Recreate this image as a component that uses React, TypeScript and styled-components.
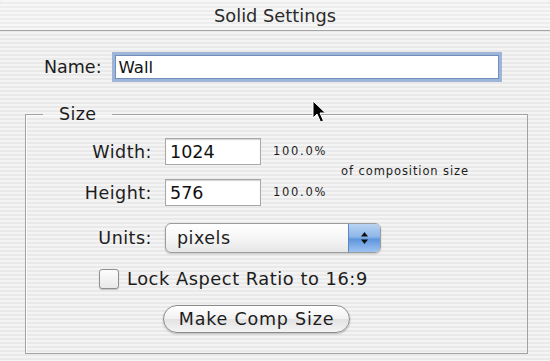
import { FC } from 'react';

import styled, { createGlobalStyle } from 'styled-components';

const GlobalStyle = createGlobalStyle`
  html, body {
    margin: 0;
    padding: 0;
  }
  body {
    font-family: 'DejaVu Sans', 'Liberation Sans', sans-serif;
    color: #1c1c1c;
  }
`;

const pinstripe = `repeating-linear-gradient(
  to bottom,
  #f4f4f4 0px,
  #f4f4f4 2px,
  #e9e9e9 2px,
  #e9e9e9 4px
)`;

/**
 * After Effects "Solid Settings" sheet, Aqua style
 */
const App: FC = () => {
  return (
    <>
      <GlobalStyle />
      <Window>
        <TitleBar>Solid Settings</TitleBar>

        <NameRow>
          <NameLabel>Name:</NameLabel>
          <NameInput defaultValue="Wall" />
        </NameRow>

        <SizeGroup>
          <Legend>Size</Legend>

          <DimGrid>
            <FieldLabel>Width:</FieldLabel>
            <NumberInput defaultValue="1024" />
            <Percent>100.0%</Percent>
            <Note>of composition size</Note>

            <FieldLabel>Height:</FieldLabel>
            <NumberInput defaultValue="576" />
            <Percent>100.0%</Percent>
          </DimGrid>

          <UnitsRow>
            <FieldLabel>Units:</FieldLabel>
            <Popup>
              <PopupValue>pixels</PopupValue>
              <PopupArrows>
                <svg width="9" height="14" viewBox="0 0 9 14">
                  <path d="M4.5 1 L8 5.5 L1 5.5 Z" fill="#111" />
                  <path d="M4.5 13 L8 8.5 L1 8.5 Z" fill="#111" />
                </svg>
              </PopupArrows>
            </Popup>
          </UnitsRow>

          <CheckRow>
            <CheckBox />
            <CheckText>Lock Aspect Ratio to 16:9</CheckText>
          </CheckRow>

          <ButtonRow>
            <PillButton type="button">Make Comp Size</PillButton>
          </ButtonRow>
        </SizeGroup>

        <Cursor width="16" height="24" viewBox="0 0 16 24">
          <path
            d="M1 1 L1 18 L5 14 L8.5 22 L11.5 20.7 L8 13 L13.5 13 Z"
            fill="#000"
            stroke="#fff"
            strokeWidth="1"
            strokeLinejoin="round"
          />
        </Cursor>
      </Window>
    </>
  );
};

export default App;

// Styled Components
const Window = styled.div`
  position: relative;
  width: 550px;
  height: 361px;
  overflow: hidden;
  background: ${pinstripe};
  display: flex;
  flex-direction: column;
`;

const TitleBar = styled.div`
  height: 30px;
  flex-shrink: 0;
  display: flex;
  align-items: center;
  justify-content: center;
  border-bottom: 1px solid #a4a4a4;
  border-radius: 7px 7px 0 0;
  background: repeating-linear-gradient(
    to bottom,
    #f7f7f7 0px,
    #f7f7f7 2px,
    #ededed 2px,
    #ededed 4px
  );
  font-size: 17.8px;
  color: #2a2a2a;
`;

const NameRow = styled.div`
  display: flex;
  align-items: center;
  gap: 13px;
  margin: 24px 0 0 44px;
`;

const NameLabel = styled.label`
  font-size: 17.5px;
`;

const NameInput = styled.input`
  width: 384px;
  height: 24px;
  box-sizing: border-box;
  padding: 0 3px;
  border: 1px solid #6f8fbd;
  background: #fff;
  box-shadow: 0 0 0 3px rgba(132, 162, 208, 0.75);
  font-family: inherit;
  font-size: 16.5px;
  color: #111;
  outline: none;
`;

const SizeGroup = styled.fieldset`
  margin: 25px 22px 7px 25px;
  padding: 0 0 18px 0;
  border: 1px solid #a2a2a2;
  box-shadow: inset 1px 1px 0 rgba(255, 255, 255, 0.8);
  flex: 1;
  display: flex;
  flex-direction: column;
  min-width: 0;
`;

const Legend = styled.legend`
  margin-left: 17px;
  padding: 0 15px 0 16px;
  font-size: 17.5px;
  letter-spacing: 0.4px;
  line-height: 20px;
`;

const DimGrid = styled.div`
  display: grid;
  grid-template-columns: 126px 96px max-content max-content;
  grid-template-rows: 27px 27px;
  justify-content: start;
  column-gap: 13px;
  row-gap: 14px;
  align-items: center;
  margin-top: 14px;
`;

const FieldLabel = styled.label`
  font-size: 17.5px;
  letter-spacing: 0.5px;
  text-align: right;
  width: 126px;
`;

const NumberInput = styled.input`
  width: 96px;
  height: 27px;
  box-sizing: border-box;
  padding: 0 4px;
  border: 1px solid #a8a8a8;
  box-shadow: inset 0 1px 1px rgba(0, 0, 0, 0.18);
  background: #fff;
  font-family: inherit;
  font-size: 17.5px;
  color: #111;
  outline: none;
`;

const Percent = styled.span`
  font-size: 11.5px;
  letter-spacing: 1.7px;
  margin-left: -1px;
  margin-top: -2px;
`;

const Note = styled.span`
  grid-column: 4;
  grid-row: 1 / span 2;
  font-size: 11.5px;
  letter-spacing: 0.9px;
  margin-left: 1px;
  margin-top: -2px;
`;

const UnitsRow = styled.div`
  display: flex;
  align-items: center;
  gap: 13px;
  margin-top: 17px;
`;

const Popup = styled.div`
  width: 216px;
  height: 30px;
  box-sizing: border-box;
  display: flex;
  border: 1px solid #9c9c9c;
  border-radius: 6px;
  overflow: hidden;
  background: linear-gradient(to bottom, #ffffff 0%, #f6f6f6 50%, #e6e6e6 100%);
  box-shadow: 0 1px 2px rgba(0, 0, 0, 0.2);
`;

const PopupValue = styled.span`
  flex: 1;
  display: flex;
  align-items: center;
  padding-left: 11px;
  font-size: 17.5px;
  letter-spacing: 0.5px;
`;

const PopupArrows = styled.span`
  width: 31px;
  display: flex;
  align-items: center;
  justify-content: center;
  border-left: 1px solid #5c87c5;
  background: linear-gradient(
    to bottom,
    #b9d4f2 0%,
    #8db6e8 45%,
    #5f96de 55%,
    #9ec3f0 100%
  );
`;

const CheckRow = styled.div`
  display: flex;
  align-items: center;
  gap: 8px;
  margin: 15px 0 0 73px;
`;

const CheckBox = styled.span`
  width: 20px;
  height: 20px;
  box-sizing: border-box;
  border: 1px solid #8e8e8e;
  border-radius: 3px;
  background: linear-gradient(to bottom, #fdfdfd, #e8e8e8);
  box-shadow: 0 1px 1px rgba(0, 0, 0, 0.2);
`;

const CheckText = styled.span`
  font-size: 17.8px;
  letter-spacing: 0.55px;
`;

const ButtonRow = styled.div`
  margin: 16px 0 0 137px;
`;

const PillButton = styled.button`
  width: 187px;
  height: 28px;
  border: 1px solid #8c8c8c;
  border-radius: 14px;
  background: linear-gradient(to bottom, #ffffff 0%, #f1f1f1 50%, #e2e2e2 51%, #f4f4f4 100%);
  box-shadow: 0 1px 2px rgba(0, 0, 0, 0.25);
  font-family: inherit;
  font-size: 17.5px;
  letter-spacing: 0.8px;
  color: #1c1c1c;
  padding: 0;
`;

const Cursor = styled.svg`
  position: absolute;
  left: 312px;
  top: 100px;
`;
